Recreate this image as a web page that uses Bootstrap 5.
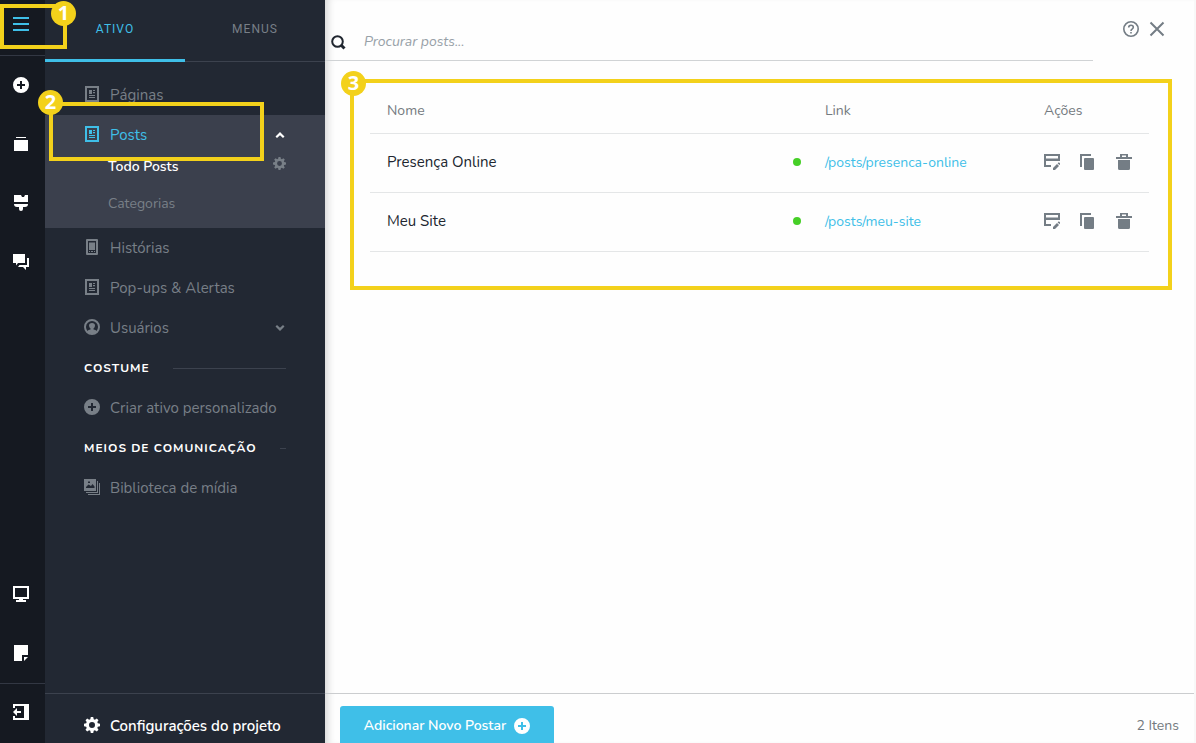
<!DOCTYPE html>
<html lang="pt-BR">
<head>
<meta charset="utf-8">
<meta name="viewport" content="width=device-width, initial-scale=1">
<title>Posts</title>
<link href="https://cdn.jsdelivr.net/npm/bootstrap@5.3.0/dist/css/bootstrap.min.css" rel="stylesheet">
<style>
  body { font-family: Nunito, Lato, sans-serif; font-size: 15px; line-height: 20px; color: #20262f; background: #fefefe; }
  svg { display: block; flex: none; fill: currentColor; }
  button { font: inherit; color: inherit; background: none; border: 0; padding: 0; }
  a { text-decoration: none; }

  .rail { width: 45px; background: #151921; color: #fff; }
  .rail button { width: 100%; height: 59px; padding: 0 0 2px 13px; display: flex; align-items: center; }
  .rail .rail-menu { height: 56px; padding-bottom: 7px; color: #3fbfe8; border-bottom: 1px solid #323743; }
  .rail .rail-exit { height: 60px; padding-bottom: 4px; border-top: 1px solid #323743; }

  .side { width: 280px; background: #222833; color: #787f87; }
  .side a { color: inherit; }
  .tabs { height: 62px; font-family: Roboto, sans-serif; font-size: 12px; letter-spacing: 1px; line-height: 16px; }
  .tabs a { flex: 1; display: flex; justify-content: center; padding-top: 21px; border-bottom: 1px solid #3c424e; }
  .tabs a.on { color: #3fbfe8; border-bottom: 3px solid #3fbfe8; }
  .menu { padding-top: 13px; }
  .entry { height: 40px; padding: 0 39px; display: flex; align-items: center; gap: 10px; }
  .entry svg { margin-bottom: 2px; }
  .entry svg.ms-auto { margin-bottom: 0; }
  .side a.on-blue { color: #3fbfe8; }
  .open-group { background: #3b404d; font-size: 14px; }
  .open-group .entry { font-size: 15px; }
  .sub { padding: 0 39px 0 63px; display: flex; align-items: center; justify-content: space-between; }
  .sub-first { height: 24px; color: #fff; font-weight: 600; }
  .sub-first button { align-self: flex-start; padding-top: 2px; color: #787f87; }
  .sub-next { height: 49px; }
  .rule-title { color: #fff; font-size: 12px; font-weight: 700; letter-spacing: 1px; gap: 23px; }
  .rule-title::after { content: ""; flex: 1; height: 1px; background: #3c424e; }
  .side-foot { height: 50px; padding: 22px 39px 0; border-top: 1px solid #3c424e; color: #fff; font-weight: 600; }
  .side-foot a { gap: 10px; }
  .side-foot svg { margin-bottom: 3px; }

  .pane { box-shadow: inset 8px 0 8px -6px #cfcfcf; border-right: 2px solid #f8f8f8; }
  .search { height: 61px; padding: 24px 0 0 6px; border-bottom: 1px solid #d0d3d5; }
  .search label { width: 33px; padding-top: 11px; }
  .search label svg { fill: none; stroke: #20262f; }
  .search input { border: 0; background: none; outline: 0; padding: 0; font-size: 14px; }
  .search input::placeholder { color: #98a1a8; font-style: italic; }
  .tools { width: 101px; padding: 21px 0 0 30px; color: #747d85; gap: 10px; }

  .mark-box { border: 4px solid #f3d11b; }
  .list-box { margin: 18px 22px 0 25px; height: 211px; padding: 0 19px 0 16px; }
  .num { position: absolute; width: 25px; height: 25px; border-radius: 50%; background: #f3d11b; color: #fff; font: bold 20px/24px "Open Sans", sans-serif; text-align: center; }
  .over-menu { position: absolute; z-index: 3; left: 0; top: 4px; width: 67px; height: 45px; pointer-events: none; }
  .over-menu .num { right: -13px; top: -7px; }
  .over-posts { position: absolute; z-index: 3; left: 4px; top: -13px; width: 215px; height: 59px; pointer-events: none; }
  .over-posts .num { left: -15px; top: -16px; }
  .list-box .num { left: -13px; top: -12px; }

  .grid-list { width: 100%; table-layout: fixed; border-collapse: separate; border-spacing: 0; }
  .grid-list th, .grid-list td { padding: 0 7px 0 17px; border-bottom: 1px solid #e4e6e7; }
  .grid-list th { height: 51px; padding-top: 6px; font-size: 14px; font-weight: 400; color: #747a80; }
  .grid-list td { height: 59px; padding-bottom: 2px; }
  .grid-list td a { color: #3fbfe8; font-size: 14px; }
  .col-link { width: 219px; }
  .col-acts { width: 122px; }
  .dot { width: 8px; height: 8px; border-radius: 50%; background: #46cf27; }
  .acts { gap: 20px; color: #747d85; }
  .pane-foot { height: 50px; border-top: 1px solid #cbcdcf; padding: 12px 15px 0 15px; }
  .add { width: 214px; height: 37px; background: #3fbfe8; color: #fff; border-radius: 3px 3px 0 0; gap: 8px; font-size: 14px; font-weight: 600; padding-top: 3px; }
  .total { font-size: 14px; color: #747a80; padding-top: 10px; }
</style>
</head>
<body>
<svg width="0" height="0" class="position-absolute" aria-hidden="true">
  <defs>
    <symbol id="plus" viewBox="0 0 16 16"><path fill-rule="evenodd" d="M8 0a8 8 0 1 0 0 16A8 8 0 0 0 8 0ZM7 4h2v3h3v2H9v3H7V9H4V7h3Z"/></symbol>
    <symbol id="page" viewBox="0 0 16 16"><path fill-rule="evenodd" d="M1 0h14v16H1ZM3 2v12h10V2ZM5 4h3v4H5ZM9 4h2v1H9ZM9 6h2v1.300H9ZM5 9h6v1H5ZM5 11h6v1H5Z"/></symbol>
    <symbol id="gear" viewBox="0 0 16 16"><path fill-rule="evenodd" d="M6.800 0h2.400l.5 2.200 1.200.5L12.800 1.500l1.700 1.700-1.200 1.900.5 1.200L16 6.800v2.400l-2.200.5-.5 1.200 1.200 1.900-1.700 1.700-1.900-1.200-1.200.5L9.200 16H6.800l-.5-2.200-1.200-.5-1.900 1.200-1.700-1.700 1.200-1.900-.5-1.200L0 9.200V6.800l2.200-.5.5-1.200-1.200-1.900 1.700-1.700 1.900 1.200 1.200-.5ZM8 5a3 3 0 1 0 0 6A3 3 0 0 0 8 5Z"/></symbol>
    <symbol id="edit" viewBox="0 0 16 16"><path fill-rule="evenodd" d="M0 0h16v7H2v4h5v2H0ZM2 2v2.600h12V2Z"/><path d="m9 14 4-4 2 2-4 4H9Zm4.600-4.600L14.800 8.200 16 9.300v1.200l-.5.600Z"/></symbol>
    <symbol id="copy" viewBox="0 0 16 16"><path d="M0 0h11v2H2v11H0Z"/><rect x="4" y="4" width="10" height="12" rx="1"/></symbol>
    <symbol id="trash" viewBox="0 0 16 16"><path fill-rule="evenodd" d="M4 0h8v3h4v2H0V3h4ZM6 1.500V3h4V1.500ZM2 6h12v8.500q0 1.500-1.500 1.500h-9Q2 16 2 14.500Z"/></symbol>
  </defs>
</svg>

<div class="d-flex vh-100 overflow-hidden">
  <nav class="rail d-flex flex-column flex-shrink-0 position-relative" aria-label="Ferramentas">
    <button class="rail-menu" aria-label="Menu"><svg width="16" height="14"><path d="M0 0h16v2H0ZM0 6h16v2H0ZM0 12h16v2H0Z"/></svg></button>
    <div class="mark-box over-menu"><span class="num">1</span></div>
    <button aria-label="Adicionar"><svg width="16" height="16"><use href="#plus"/></svg></button>
    <button aria-label="Coleções"><svg width="16" height="14"><path d="M3 0h10v1H3ZM1 3h14v11H1Z"/></svg></button>
    <button aria-label="Estilo"><svg width="16" height="16"><path d="M1 0h7l1 2h2l1-2h3v7H1ZM1 9h14q0 3-3 3h-2v2q0 2-2 2t-2-2v-2H4q-3 0-3-3Z"/></svg></button>
    <button aria-label="Comentários"><svg width="16" height="16"><path d="M0 0h12v9H5l-2 2.500V9H0ZM14 4h2v9h-3v3l-3-3H5l1.500-2H14Z"/></svg></button>
    <div class="mt-auto">
      <button aria-label="Visualizar"><svg width="16" height="16"><path fill-rule="evenodd" d="M0 0h16v13H0ZM2 2v9h12V2ZM6 13h4v1h3v2H3v-2h3Z"/></svg></button>
      <button aria-label="Notas"><svg width="16" height="16"><path d="M1 0h14v10H9v6H1ZM11 12h4l-4 4Z"/></svg></button>
    </div>
    <button class="rail-exit" aria-label="Sair"><svg width="16" height="16"><path d="M0 0h16v16H0v-4h2v2h9V2H2v2H0ZM4 4v3h4v2H4v3L0 8Z"/></svg></button>
  </nav>

  <aside class="side d-flex flex-column flex-shrink-0">
    <div class="tabs d-flex"><a class="on" href="#">ATIVO</a><a href="#">MENUS</a></div>
    <nav class="menu flex-grow-1">
      <a class="entry" href="#"><svg width="16" height="16"><use href="#page"/></svg>Páginas</a>
      <div class="open-group position-relative">
        <a class="entry on-blue" href="#"><svg width="16" height="16"><use href="#page"/></svg>Posts
          <svg class="ms-auto text-white" width="12" height="8"><path d="M6 1 10.500 5.500 9 7 6 4.200 3 7 1.500 5.500Z"/></svg></a>
        <div class="sub sub-first"><a href="#">Todo Posts</a><button aria-label="Configurar"><svg width="13" height="13"><use href="#gear"/></svg></button></div>
        <div class="sub sub-next"><a href="#">Categorias</a></div>
        <div class="mark-box over-posts"><span class="num">2</span></div>
      </div>
      <a class="entry" href="#"><svg width="16" height="16"><path fill-rule="evenodd" d="M3 0h10q1 0 1 1v14q0 1-1 1H3q-1 0-1-1V1q0-1 1-1ZM4 2v12h8V2ZM5 3.500h6V11H5ZM5 12h1v1H5ZM7 12h2v1H7ZM10 12h1v1h-1Z"/></svg>Histórias</a>
      <a class="entry" href="#"><svg width="16" height="16"><use href="#page"/></svg>Pop-ups &amp; Alertas</a>
      <a class="entry" href="#"><svg width="16" height="16"><path fill-rule="evenodd" d="M8 0a8 8 0 1 0 0 16A8 8 0 0 0 8 0ZM3.500 12A6 6 0 1 1 12.500 12Q12 10.500 9.500 10.500V9.500Q11 8.500 11 6.500 11 4 8 4T5 6.500Q5 8.500 6.500 9.500v1Q4 10.500 3.500 12Z"/></svg>Usuários
        <svg class="ms-auto" width="12" height="8"><path d="M6 7 10.500 2.500 9 1 6 3.800 3 1 1.500 2.500Z"/></svg></a>
      <div class="entry rule-title">COSTUME</div>
      <a class="entry" href="#"><svg width="16" height="16"><use href="#plus"/></svg>Criar ativo personalizado</a>
      <div class="entry rule-title">MEIOS DE COMUNICAÇÃO</div>
      <a class="entry" href="#"><svg width="16" height="16"><path fill-rule="evenodd" d="M0 0h12v12H0ZM2 9h8.500V7.500L8.500 5 7 7 4.500 5.500 2 8ZM4 2.500v1.500h2V2.500ZM13 2h1v12H2v-1h11ZM15 4h1v12H4v-1h11Z"/></svg>Biblioteca de mídia</a>
    </nav>
    <div class="side-foot"><a class="d-flex align-items-center" href="#"><svg width="16" height="16"><use href="#gear"/></svg>Configurações do projeto</a></div>
  </aside>

  <main class="pane d-flex flex-column flex-grow-1">
    <header class="d-flex">
      <div class="search d-flex flex-grow-1">
        <label for="find" aria-label="Procurar"><svg width="15" height="15" stroke-width="2"><circle cx="6.500" cy="6.500" r="5.300"/><path d="m10 10 3.500 3.500" stroke-width="3"/></svg></label>
        <input id="find" class="flex-grow-1" type="text" placeholder="Procurar posts...">
      </div>
      <div class="tools d-flex align-items-start">
        <button aria-label="Ajuda"><svg width="16" height="16"><path fill-rule="evenodd" d="M8 0a8 8 0 1 0 0 16A8 8 0 0 0 8 0ZM8 1.600a6.400 6.400 0 1 1 0 12.800A6.400 6.400 0 0 1 8 1.600Z"/><path d="M5.700 6.600Q5.700 4.300 8 4.300t2.300 2q0 1-1.200 1.800Q8 8.800 8 10" fill="none" stroke="currentColor" stroke-width="1.600"/><path d="M7.200 11h1.600v1.600H7.200Z"/></svg></button>
        <button aria-label="Fechar"><svg width="16" height="16" stroke="currentColor" stroke-width="2"><path d="m1.500 1.500 13 13M14.500 1.500l-13 13"/></svg></button>
      </div>
    </header>

    <section class="mark-box list-box position-relative">
      <span class="num">3</span>
      <table class="grid-list">
        <colgroup><col><col class="col-link"><col class="col-acts"></colgroup>
        <thead><tr><th scope="col">Nome</th><th scope="col">Link</th><th scope="col">Ações</th></tr></thead>
        <tbody>
          <tr>
            <td><div class="d-flex align-items-center justify-content-between">Presença Online<span class="dot"></span></div></td>
            <td><a href="#">/posts/presenca-online</a></td>
            <td><div class="acts d-flex"><button aria-label="Editar"><svg width="16" height="16"><use href="#edit"/></svg></button><button aria-label="Duplicar"><svg width="16" height="16"><use href="#copy"/></svg></button><button aria-label="Excluir"><svg width="16" height="16"><use href="#trash"/></svg></button></div></td>
          </tr>
          <tr>
            <td><div class="d-flex align-items-center justify-content-between">Meu Site<span class="dot"></span></div></td>
            <td><a href="#">/posts/meu-site</a></td>
            <td><div class="acts d-flex"><button aria-label="Editar"><svg width="16" height="16"><use href="#edit"/></svg></button><button aria-label="Duplicar"><svg width="16" height="16"><use href="#copy"/></svg></button><button aria-label="Excluir"><svg width="16" height="16"><use href="#trash"/></svg></button></div></td>
          </tr>
        </tbody>
      </table>
    </section>

    <footer class="pane-foot d-flex justify-content-between mt-auto">
      <button class="add d-flex align-items-center justify-content-center">Adicionar Novo Postar<svg width="16" height="16"><use href="#plus"/></svg></button>
      <span class="total">2 Itens</span>
    </footer>
  </main>
</div>
<script src="https://cdn.jsdelivr.net/npm/bootstrap@5.3.0/dist/js/bootstrap.bundle.min.js"></script>
</body>
</html>
